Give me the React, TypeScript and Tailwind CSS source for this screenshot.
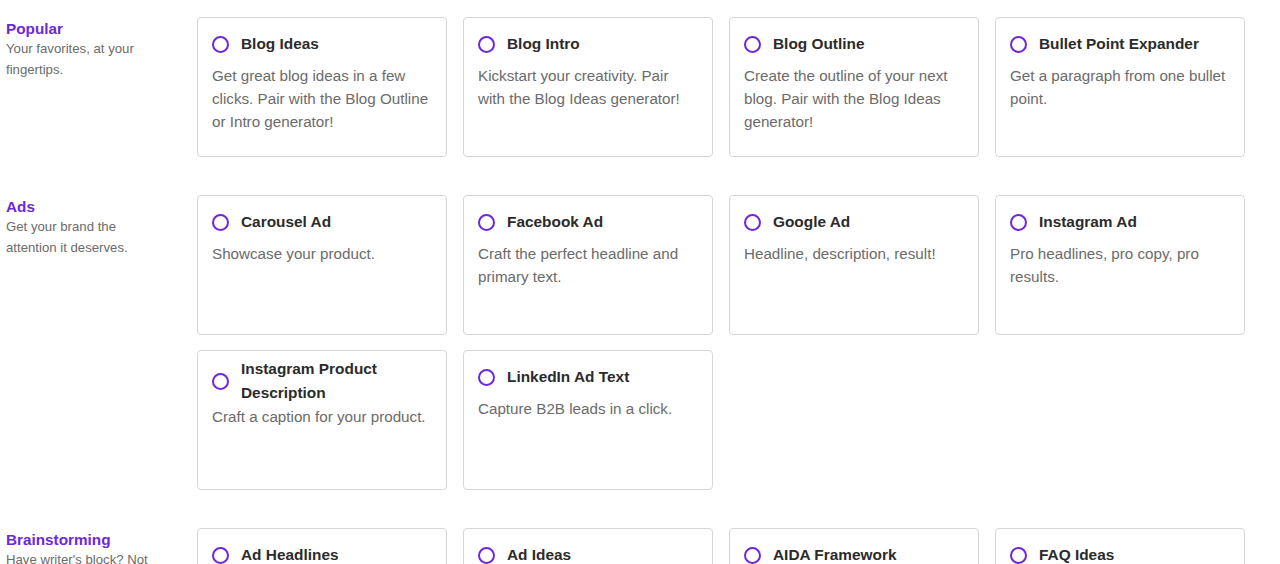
import React from "react";

type Card = { title: string; desc: string };
type Section = { label: string; sub: string; cards: Card[] };

const sections: Section[] = [
  {
    label: "Popular",
    sub: "Your favorites, at your fingertips.",
    cards: [
      { title: "Blog Ideas", desc: "Get great blog ideas in a few clicks. Pair with the Blog Outline or Intro generator!" },
      { title: "Blog Intro", desc: "Kickstart your creativity. Pair with the Blog Ideas generator!" },
      { title: "Blog Outline", desc: "Create the outline of your next blog. Pair with the Blog Ideas generator!" },
      { title: "Bullet Point Expander", desc: "Get a paragraph from one bullet point." },
    ],
  },
  {
    label: "Ads",
    sub: "Get your brand the attention it deserves.",
    cards: [
      { title: "Carousel Ad", desc: "Showcase your product." },
      { title: "Facebook Ad", desc: "Craft the perfect headline and primary text." },
      { title: "Google Ad", desc: "Headline, description, result!" },
      { title: "Instagram Ad", desc: "Pro headlines, pro copy, pro results." },
      { title: "Instagram Product Description", desc: "Craft a caption for your product." },
      { title: "LinkedIn Ad Text", desc: "Capture B2B leads in a click." },
    ],
  },
  {
    label: "Brainstorming",
    sub: "Have writer's block? Not anymore.",
    cards: [
      { title: "Ad Headlines", desc: "Catchy headlines for your next ad campaign." },
      { title: "Ad Ideas", desc: "Fresh ideas for your next ad." },
      { title: "AIDA Framework", desc: "Attention, Interest, Desire, Action." },
      { title: "FAQ Ideas", desc: "Answer the questions your customers ask." },
    ],
  },
];

function CardView({ card }: { card: Card }) {
  return (
    <div className="h-[140px] rounded-[4px] border border-[#d6d6d6] bg-white pt-[6px] pl-[14px] pr-[13px]">
      <div className="flex min-h-[40px] items-center gap-[12px]">
        <span className="h-[17px] w-[17px] shrink-0 rounded-full border-2 border-[#6d28d9]" />
        <span className="text-[15.4px] font-bold leading-[24px] text-[#2b2b2b]">{card.title}</span>
      </div>
      <p className="text-[15.2px] leading-[23px] text-[#6b6b6b]">{card.desc}</p>
    </div>
  );
}

export default function App() {
  return (
    <div className="min-h-screen bg-white pt-[17px] pl-[6px] font-['Liberation_Sans',Arial,sans-serif]">
      <div className="flex flex-col gap-[38px]">
        {sections.map((s) => (
          <div key={s.label} className="flex">
            <div className="w-[191px] shrink-0 pt-[3px]">
              <div className="text-[15.3px] font-bold leading-[18px] text-[#6d28d9]">{s.label}</div>
              <div className="w-[145px] text-[13.2px] leading-[21px] text-[#6b6b6b]">{s.sub}</div>
            </div>
            <div className="grid grid-cols-[repeat(4,250px)] gap-x-[16px] gap-y-[15px]">
              {s.cards.map((c) => (
                <CardView key={c.title} card={c} />
              ))}
            </div>
          </div>
        ))}
      </div>
    </div>
  );
}
